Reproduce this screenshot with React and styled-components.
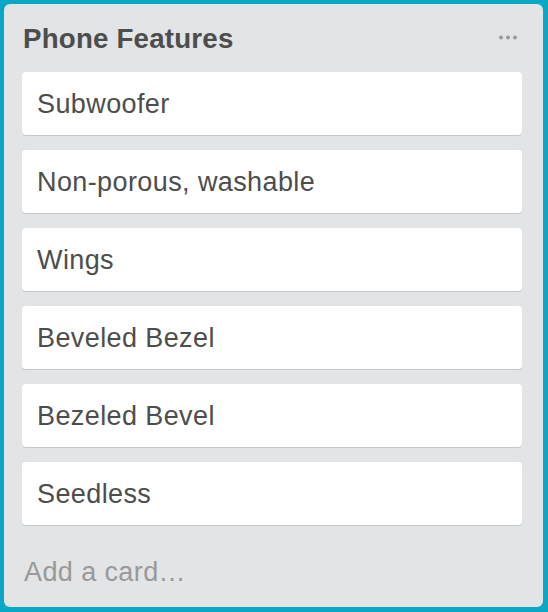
import React from 'react';
import styled, { createGlobalStyle } from 'styled-components';

const cards = [
    'Subwoofer',
    'Non-porous, washable',
    'Wings',
    'Beveled Bezel',
    'Bezeled Bevel',
    'Seedless',
];

export default function App() {
    return (
        <>
            <GlobalStyle />
            <Page>
                <List>
                    <ListHeader>
                        <Title>Phone Features</Title>
                        <MenuDots width="18" height="5" viewBox="0 0 18 5">
                            <circle cx="2" cy="2.5" r="2" />
                            <circle cx="9" cy="2.5" r="2" />
                            <circle cx="16" cy="2.5" r="2" />
                        </MenuDots>
                    </ListHeader>

                    <Cards>
                        {cards.map((c) => (
                            <Card key={c}>{c}</Card>
                        ))}
                    </Cards>

                    <AddCard>Add a card…</AddCard>
                </List>
            </Page>
        </>
    );
}

const GlobalStyle = createGlobalStyle`
    html, body {
        margin: 0;
        padding: 0;
    }
    body {
        font-family: "Liberation Sans", Arial, Helvetica, sans-serif;
        background: #0ba8c6;
    }
    * {
        box-sizing: border-box;
    }
`;

const Page = styled.div`
    height: 612px;
    padding: 4px 5px 5px 4px;
    background: #0ba8c6;
`;

const List = styled.section`
    height: 100%;
    display: flex;
    flex-direction: column;
    background: #e2e4e6;
    border-radius: 6px;
    padding: 0 21px 0 18px;
`;

const ListHeader = styled.header`
    height: 68px;
    display: flex;
    align-items: flex-start;
    justify-content: space-between;
    padding: 20px 5px 0 1px;
`;

const Title = styled.h2`
    margin: 0;
    font-family: "Liberation Sans", Arial, sans-serif;
    font-size: 27.7px;
    line-height: 30px;
    font-weight: bold;
    letter-spacing: 0.2px;
    color: #4d4d4d;
`;

const MenuDots = styled.svg`
    margin-top: 11px;
    fill: #999;
`;

const Cards = styled.div`
    display: flex;
    flex-direction: column;
    gap: 15px;
`;

const Card = styled.div`
    height: 63px;
    padding: 0 15px;
    background: #fff;
    border-radius: 4px;
    box-shadow: 0 1px 0 #c4c9cc;
    font-family: "Liberation Sans", Arial, sans-serif;
    font-size: 27px;
    line-height: 64px;
    letter-spacing: 0.4px;
    color: #4d4d4d;
`;

const AddCard = styled.div`
    margin-top: 32px;
    padding-left: 2px;
    font-family: "Liberation Sans", Arial, sans-serif;
    font-size: 27px;
    line-height: 30px;
    letter-spacing: 0.4px;
    color: #999;
`;
